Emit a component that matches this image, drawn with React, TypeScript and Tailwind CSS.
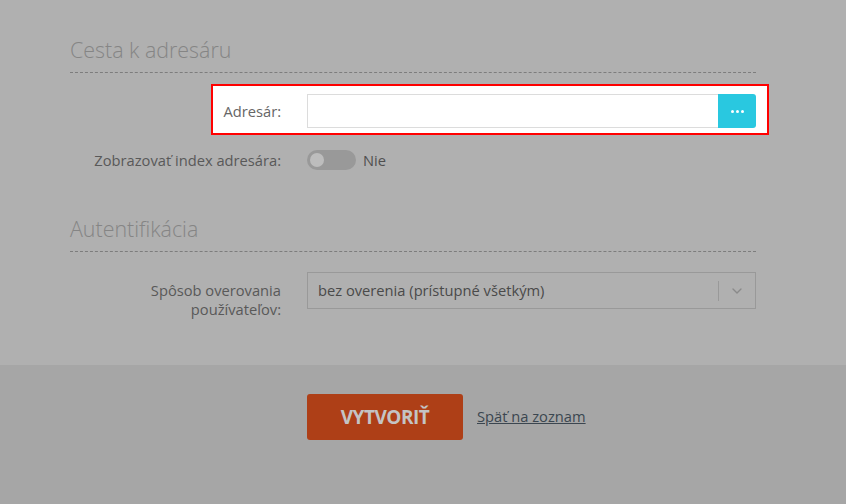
import { ChevronDown } from "lucide-react"

const font = { fontFamily: '"Open Sans", "Liberation Sans", sans-serif' }

export default function App() {
  return (
    <div className="w-[846px] h-[504px] bg-[#b0b0b0] flex flex-col" style={font}>
      {/* Form */}
      <div className="h-[365px] pl-[70px] pr-[90px] pt-[35px]">
        {/* Section: path */}
        <div className="border-b border-dashed border-[#7d7d7d] pb-[8px]">
          <h2 className="text-[21.4px] leading-[29px] font-light text-[#858585]">Cesta k adresáru</h2>
        </div>

        {/* Highlighted row */}
        <div className="mt-[11px] ml-[141px] -mr-[13px] border-2 border-[#ff0000] bg-white flex items-center pt-[8px] pb-[5px] pr-[11px]">
          <label className="w-[68px] text-right text-[14.7px] text-[#666]">Adresár:</label>
          <div className="ml-[26px] flex-1 flex h-[34px]">
            <input className="flex-1 border border-[#dcdcdc] border-r-0 outline-none px-3 text-[14px]" />
            <button className="w-[38px] bg-[#29c8e0] rounded-r-[3px] flex items-center justify-center gap-[2px]">
              <span className="w-[3px] h-[3px] bg-white rounded-full" />
              <span className="w-[3px] h-[3px] bg-white rounded-full" />
              <span className="w-[3px] h-[3px] bg-white rounded-full" />
            </button>
          </div>
        </div>

        {/* Toggle row */}
        <div className="mt-[15px] flex items-center h-[20px]">
          <label className="w-[211px] text-right text-[14.7px] text-[#595959]">Zobrazovať index adresára:</label>
          <div className="ml-[26px] w-[49px] h-[20px] rounded-full bg-[#999] flex items-center px-[3px]">
            <span className="w-[14px] h-[14px] rounded-full bg-[#bdbdbd]" />
          </div>
          <span className="ml-[7px] text-[14.7px] text-[#4f4f4f]">Nie</span>
        </div>

        {/* Section: auth */}
        <div className="mt-[44px] border-b border-dashed border-[#7d7d7d] pb-[8px]">
          <h2 className="text-[21.4px] leading-[29px] font-light text-[#858585]">Autentifikácia</h2>
        </div>

        <div className="mt-[20px] flex items-start">
          <label className="w-[211px] text-right text-[14.7px] leading-[19px] text-[#595959] pt-[9px]">
            Spôsob overovania<br />používateľov:
          </label>
          <div className="ml-[26px] flex-1 h-[37px] border border-[#999] flex items-center">
            <span className="flex-1 px-[10px] text-[14.7px] text-[#4a4a4a]">bez overenia (prístupné všetkým)</span>
            <span className="w-px h-[20px] bg-[#999]" />
            <div className="w-[36px] flex items-center justify-center">
              <ChevronDown className="w-[16px] h-[16px] text-[#8a8a8a]" strokeWidth={2} />
            </div>
          </div>
        </div>
      </div>

      {/* Footer */}
      <div className="flex-1 bg-[#a6a6a6] flex items-start pl-[307px] pt-[29px]">
        <button className="w-[156px] h-[46px] bg-[#ae3f17] rounded-[3px] text-[19px] font-bold text-[#c4c4c4] tracking-tight">
          VYTVORIŤ
        </button>
        <a href="#" className="ml-[14px] mt-[11px] text-[14.7px] text-[#3b4650] underline">Späť na zoznam</a>
      </div>
    </div>
  )
}
